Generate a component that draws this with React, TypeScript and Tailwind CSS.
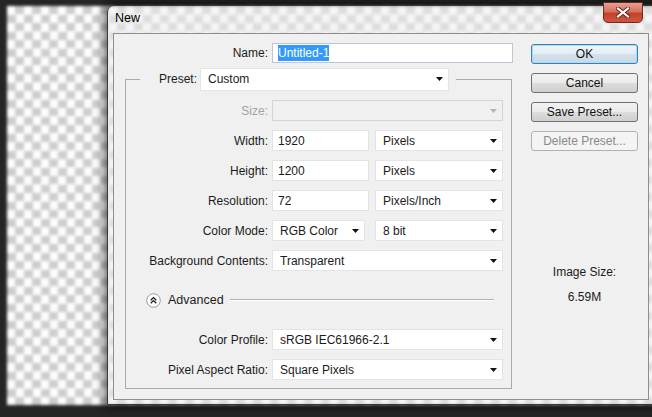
import React from "react"

function Arrow({ disabled = false }: { disabled?: boolean }) {
  return (
    <svg width="7" height="4" viewBox="0 0 7 4" className="shrink-0">
      <polygon points="0,0 7,0 3.5,4" fill={disabled ? "#b4b4b4" : "#111111"} />
    </svg>
  )
}

function Select({ value, width, disabled = false }: { value: string; width: string; disabled?: boolean }) {
  return (
    <div
      className={`${width} h-[21px] flex items-center justify-between pl-[7px] pr-[5px] border ${
        disabled ? "bg-[#f0f0f0] border-[#d4d4d4]" : "bg-white border-[#e4e4e4]"
      }`}
    >
      <span className="leading-none">{value}</span>
      <Arrow disabled={disabled} />
    </div>
  )
}

function Input({ value, width }: { value: string; width: string }) {
  return (
    <div className={`${width} h-[21px] flex items-center pl-[5px] bg-white border border-[#e2e2e2]`}>
      <span className="leading-none">{value}</span>
    </div>
  )
}

function Row({ label, children, disabled = false }: { label: string; children: React.ReactNode; disabled?: boolean }) {
  return (
    <div className="flex items-center h-[21px] gap-[4px]">
      <span className={`w-[128px] text-right leading-none ${disabled ? "text-[#a3a3a3]" : ""}`}>{label}</span>
      {children}
    </div>
  )
}

function Button({ label, variant = "normal" }: { label: string; variant?: "normal" | "default" | "disabled" }) {
  const styles = {
    normal:
      "border-[#707070] bg-[linear-gradient(#f2f2f2,#ebebeb_50%,#dddddd_50%,#cfcfcf)] text-[#111]",
    default:
      "border-[#3c7fb1] bg-[linear-gradient(#eef5f9,#e3edf3_50%,#d3e2ec_50%,#c8d9e5)] shadow-[inset_0_0_0_1px_#a7dcf6] text-[#111]",
    disabled: "border-[#adb2b5] bg-[#f4f4f4] text-[#8a8a8a]",
  }[variant]
  return (
    <div className={`h-[20px] w-[107px] rounded-[3px] border flex items-center justify-center leading-none ${styles}`}>
      {label}
    </div>
  )
}

export default function App() {
  return (
    <div className="relative w-[652px] h-[417px] overflow-hidden bg-[#252525] font-['Liberation_Sans',Arial,sans-serif] text-[12px] text-[#1b1b1b]">
      {/* canvas behind the dialog */}
      <div className="absolute left-[7px] top-[6px] w-[660px] h-[399px] blur-[1.8px] bg-[repeating-conic-gradient(#cdcdcd_0_25%,#fdfdfd_0_50%)] bg-[length:17px_17px]" />

      {/* dialog window */}
      <div className="absolute left-[107px] top-[5px] w-[560px] h-[400px] flex flex-col rounded-tl-[7px] border border-[#3a3a3a] bg-[rgba(238,238,238,0.5)] shadow-[0_0_10px_3px_rgba(0,0,0,0.6)]">
        <div className="h-[27px] flex items-start pl-[7px] shrink-0">
          <span className="mt-[6px] text-[12.5px] text-black leading-none">New</span>
          <div className="ml-auto mr-[23px] -mt-[4px] w-[40px] h-[21px] rounded-b-[5px] border border-[#6b2a20] bg-[linear-gradient(#e7a191,#d6705d_45%,#c2412b_55%,#d0563f)] flex items-center justify-center">
            <svg width="14" height="11" viewBox="0 0 14 11">
              <path d="M2 1.5 L12 9.5 M12 1.5 L2 9.5" stroke="#5a2219" strokeWidth="4" strokeLinecap="square" />
              <path d="M2 1.5 L12 9.5 M12 1.5 L2 9.5" stroke="#ffffff" strokeWidth="2.2" strokeLinecap="square" />
            </svg>
          </div>
        </div>

        <div className="ml-[5px] w-[536px] h-[367px] border border-[#8e8e8e] bg-[#f0f0f0] flex">
          {/* left column */}
          <div className="pl-[11px] pt-[9px] flex flex-col">
            <div className="flex items-center gap-[4px] h-[20px]">
              <span className="w-[143px] text-right leading-none">Name:</span>
              <div className="w-[241px] h-[20px] flex items-center pl-[5px] bg-white border border-[#b9c8d4]">
                <span className="bg-[#3399ff] text-white leading-none py-[2px]">Untitled-1</span>
              </div>
            </div>

            <fieldset className="mt-[4px] w-[387px] border border-[#a9a9a9] pl-[14px] pr-[7px] pt-[9px] pb-[8px]">
              <legend className="flex items-center h-[24px] pr-[7px]">
                <span className="w-[57px] text-right leading-none">Preset:</span>
                <div className="ml-[3px] w-[249px] h-[23px] flex items-center justify-between pl-[7px] pr-[5px] bg-white border border-[#e4e4e4]">
                  <span className="leading-none">Custom</span>
                  <Arrow />
                </div>
              </legend>

              <div className="flex flex-col gap-[9px]">
                <Row label="Size:" disabled>
                  <Select value="" width="w-[231px]" disabled />
                </Row>
                <Row label="Width:">
                  <Input value="1920" width="w-[97px]" />
                  <div className="ml-[2px]">
                    <Select value="Pixels" width="w-[128px]" />
                  </div>
                </Row>
                <Row label="Height:">
                  <Input value="1200" width="w-[97px]" />
                  <div className="ml-[2px]">
                    <Select value="Pixels" width="w-[128px]" />
                  </div>
                </Row>
                <Row label="Resolution:">
                  <Input value="72" width="w-[97px]" />
                  <div className="ml-[2px]">
                    <Select value="Pixels/Inch" width="w-[128px]" />
                  </div>
                </Row>
                <Row label="Color Mode:">
                  <Select value="RGB Color" width="w-[93px]" />
                  <div className="ml-[6px]">
                    <Select value="8 bit" width="w-[128px]" />
                  </div>
                </Row>
                <Row label="Background Contents:">
                  <Select value="Transparent" width="w-[231px]" />
                </Row>
              </div>

              <div className="mt-[21px] h-[16px] flex items-center pl-[6px]">
                <svg width="15" height="15" viewBox="0 0 15 15" className="shrink-0">
                  <circle cx="7.5" cy="7.5" r="6.8" fill="#ffffff" stroke="#9a9a9a" strokeWidth="1" />
                  <path d="M4.7 7.2 L7.5 4.6 L10.3 7.2 M4.7 10.2 L7.5 7.6 L10.3 10.2" fill="none" stroke="#1a1a1a" strokeWidth="1.3" />
                </svg>
                <span className="ml-[7px] leading-none text-[12.5px]">Advanced</span>
                <div className="flex-1 ml-[6px] mr-[10px] h-[2px] border-t border-[#b2b2b2] bg-[#fdfdfd]" />
              </div>

              <div className="mt-[21px] flex flex-col gap-[9px]">
                <Row label="Color Profile:">
                  <Select value="sRGB IEC61966-2.1" width="w-[231px]" />
                </Row>
                <Row label="Pixel Aspect Ratio:">
                  <Select value="Square Pixels" width="w-[231px]" />
                </Row>
              </div>
            </fieldset>
          </div>

          {/* right column */}
          <div className="ml-[18px] pt-[10px] w-[107px] flex flex-col">
            <div className="flex flex-col gap-[9px]">
              <Button label="OK" variant="default" />
              <Button label="Cancel" />
              <Button label="Save Preset..." />
              <Button label="Delete Preset..." variant="disabled" />
            </div>
            <div className="mt-[115px] text-center leading-none">Image Size:</div>
            <div className="mt-[13px] text-center leading-none">6.59M</div>
          </div>
        </div>
      </div>
    </div>
  )
}
